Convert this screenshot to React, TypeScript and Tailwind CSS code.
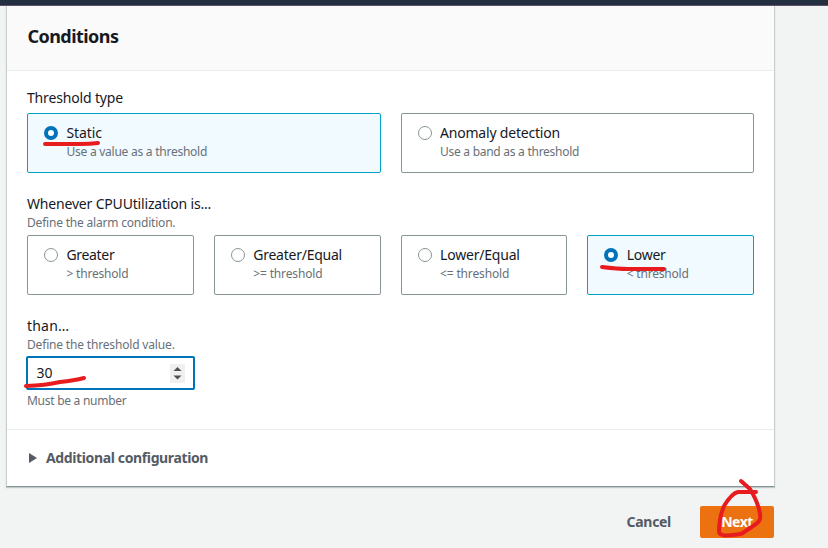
import React from "react";

function Radio({ checked }: { checked?: boolean }) {
  return (
    <span
      className={
        checked
          ? "mt-[1px] box-border block size-[14px] shrink-0 rounded-full border-4 border-[#0073bb] bg-white"
          : "mt-[1px] box-border block size-[14px] shrink-0 rounded-full border border-[#879596] bg-white"
      }
    />
  );
}

type TileProps = { label: string; note: string; checked?: boolean; labelClass?: string; noteClass?: string };

function Tile({ label, note, checked, labelClass = "", noteClass = "" }: TileProps) {
  return (
    <div
      className={
        "flex h-[60px] gap-[8.5px] rounded-[2px] border pl-4 pt-[11px] " +
        (checked ? "border-[#00a1c9] bg-[#f1faff]" : "border-[#879596] bg-white")
      }
    >
      <Radio checked={checked} />
      <div className="whitespace-nowrap">
        <div className={"-mt-px text-[14px] leading-[17px] " + labelClass}>{label}</div>
        <div className={"mt-[3px] text-[12px] leading-4 text-[#687078] " + noteClass}>{note}</div>
      </div>
    </div>
  );
}

export default function App() {
  return (
    <div className="relative h-[548px] w-[828px] overflow-hidden bg-[#f2f3f3] font-['Noto_Sans','Open_Sans',sans-serif] text-[#16191f]">
      <header className="h-[6px] border-b border-[#5a5068] bg-[#232f3e]" />
      <main className="ml-[6px] w-[769px]">
        <section className="h-[481px] border-x border-b border-x-[#c8cfcf] border-b-[#879596] bg-white shadow-[0_1px_1px_0_rgba(0,28,36,0.2)]">
          <div className="h-[65px] border-b border-[#eaeded] bg-[#fafafa] pl-[20.5px] pt-[18px]">
            <h2 className="text-[18px] leading-6 font-bold tracking-[-0.55px]">Conditions</h2>
          </div>
          <div className="h-[359px] border-b border-[#eaeded] px-5 pt-[17px]">
            <div className="h-[25px] text-[14px] leading-[20px] tracking-[-0.16px]"><span>Threshold type</span></div>
            <div className="grid grid-cols-2 gap-5">
              <Tile checked label="Static" note="Use a value as a threshold" noteClass="tracking-[-0.25px]" labelClass="tracking-[-0.1px]" />
              <Tile label="Anomaly detection" note="Use a band as a threshold" noteClass="tracking-[-0.27px]" labelClass="tracking-[-0.2px]" />
            </div>
            <div className="mt-[21px] text-[14px] leading-[19px] tracking-[-0.18px]"><span>Whenever CPUUtilization is...</span></div>
            <div className="h-[22px] pt-px text-[12px] leading-[18px] tracking-[-0.2px] text-[#687078]"><span>Define the alarm condition.</span></div>
            <div className="grid grid-cols-4 gap-5">
              <Tile label="Greater" note="> threshold" noteClass="tracking-[-0.2px]" labelClass="tracking-[-0.33px]" />
              <Tile label="Greater/Equal" note=">= threshold" noteClass="tracking-[-0.15px]" labelClass="tracking-[-0.25px]" />
              <Tile label="Lower/Equal" note="<= threshold" noteClass="tracking-[-0.15px]" labelClass="tracking-[-0.2px]" />
              <Tile checked label="Lower" note="< threshold" noteClass="tracking-[-0.2px]" labelClass="tracking-[-0.3px]" />
            </div>
            <div className="mt-[21px] text-[14px] leading-[19px] tracking-[0.2px]"><span>than…</span></div>
            <div className="h-[21px] pt-px text-[12px] leading-[18px] tracking-[-0.17px] text-[#687078]"><span>Define the threshold value.</span></div>
            <div className="-ml-px flex h-[34px] w-[169px] items-center justify-between rounded-[2px] border-2 border-[#0073bb] bg-white pr-[8px] pl-[8.5px] text-[14px]">
              <span className="-mt-0.5">30</span>
              <span className="flex h-[19px] w-[15px] items-center justify-center bg-[#efefef]">
                <svg width="15" height="19" viewBox="0 0 15 19" fill="#505050">
                  <path d="M7.5 3 11.5 7H3.5ZM7.5 15.5 11.5 11.5H3.5Z" />
                </svg>
              </span>
            </div>
            <div className="mt-[2px] text-[12px] leading-[18px] tracking-[-0.27px] text-[#687078]"><span>Must be a number</span></div>
          </div>
          <div className="flex h-[56px] items-center pl-[22px] text-[14px] font-bold tracking-[-0.37px] text-[#545b64]">
            <svg width="8" height="10" viewBox="0 0 8 10" fill="#545b64" className="mr-[9px]">
              <path d="M0 0 8 5 0 10Z" />
            </svg>
            <span className="-mt-0.5">Additional configuration</span>
          </div>
        </section>
        <div className="mt-[19px] flex h-8 items-center justify-end text-[14px] font-bold tracking-[-0.3px]">
          <span className="-mt-0.5 mr-[29px] text-[#545b64]">Cancel</span>
          <button className="mr-px h-8 w-[74px] rounded-[2px] bg-[#ec7211] pb-0.5 tracking-[-0.5px] text-white">Next</button>
        </div>
      </main>
      <svg className="absolute inset-0" width="828" height="548" viewBox="0 0 828 548" fill="none" stroke="#e81c1f" strokeWidth="4" strokeLinecap="round" strokeLinejoin="round">
        <path d="M45 144H80Q90 144 98 143" />
        <path d="M602 267Q618 269 628 269H664" />
        <path d="M26 386Q45 385.500 60 382Q74 380.500 84 378" />
        <path d="M741 481 750 489Q756 499 758 506Q761 514 760 519Q759 522 756 524L742 533.500Q736 535 725 535.500Q719 535 719 531Q719 518 724 506Q732 493 738 492H756" />
      </svg>
    </div>
  );
}
